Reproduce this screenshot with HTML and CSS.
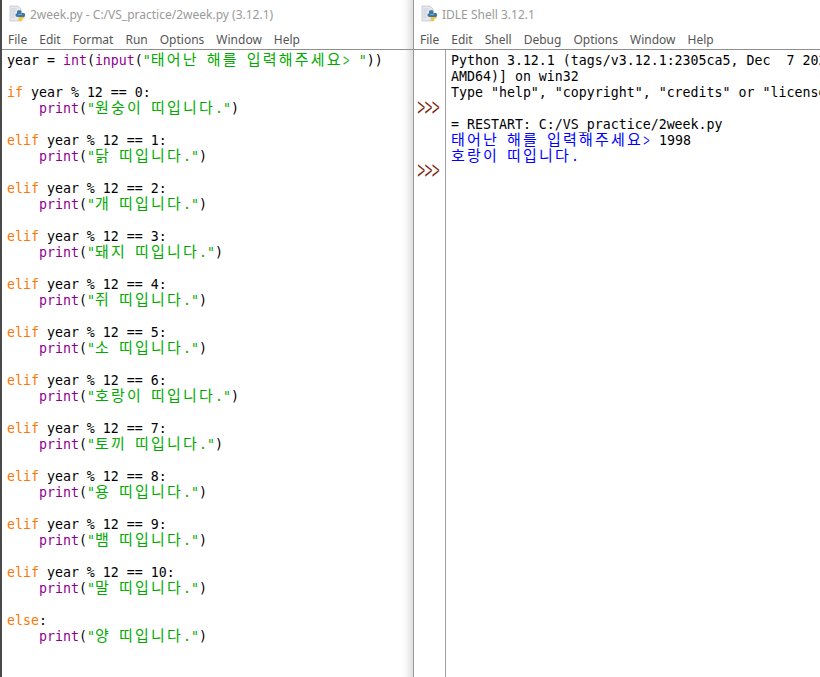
FILE: index.html
```html
<!DOCTYPE html>
<html lang="ko">
<head>
<meta charset="utf-8">
<title>IDLE</title>
<link rel="stylesheet" href="styles.css">
</head>
<body>
<div class="desktop">
  <section class="window editor-window">
    <header class="titlebar">
      <svg class="app-icon" viewBox="0 0 18 18"><path d="M1 1h8l3 3v12H1z" fill="#e6e8ec" stroke="#bcc0c8" stroke-width=".7"/><path d="M2.500 4h5M2.500 6h4M2.500 8h3M2.500 10h3M2.500 12h3" stroke="#c4c8d0" stroke-width=".8"/><path d="M8 6.500c0-1.800 4.500-1.800 4.500 0v2.500h-3v.5h3.200V8H15c1.500 0 1.500 4 0 4h-5.500C7.500 12 6.500 11.500 6.500 10S7 8.500 8 8.500z" fill="#3d78ab"/><path d="M10 12h5.500v1.500h-2v1.500c0 1.600-4 1.600-4 0v-2z" fill="#f2c53d"/></svg>
      <span class="title">2week.py - C:/VS_practice/2week.py (3.12.1)</span>
    </header>
    <nav class="menubar"><span>File</span><span>Edit</span><span>Format</span><span>Run</span><span>Options</span><span>Window</span><span>Help</span></nav>
    <pre class="code">year = <i class="b">int</i>(<i class="b">input</i>(<i class="s">"<b>태어난</b> <b>해를</b> <b>입력해주세요</b><u>&gt;</u> "</i>))

<i class="k">if</i> year % 12 == 0:
    <i class="b">print</i>(<i class="s">"<b>원숭이</b> <b>띠입니다</b>."</i>)

<i class="k">elif</i> year % 12 == 1:
    <i class="b">print</i>(<i class="s">"<b>닭</b> <b>띠입니다</b>."</i>)

<i class="k">elif</i> year % 12 == 2:
    <i class="b">print</i>(<i class="s">"<b>개</b> <b>띠입니다</b>."</i>)

<i class="k">elif</i> year % 12 == 3:
    <i class="b">print</i>(<i class="s">"<b>돼지</b> <b>띠입니다</b>."</i>)

<i class="k">elif</i> year % 12 == 4:
    <i class="b">print</i>(<i class="s">"<b>쥐</b> <b>띠입니다</b>."</i>)

<i class="k">elif</i> year % 12 == 5:
    <i class="b">print</i>(<i class="s">"<b>소</b> <b>띠입니다</b>."</i>)

<i class="k">elif</i> year % 12 == 6:
    <i class="b">print</i>(<i class="s">"<b>호랑이</b> <b>띠입니다</b>."</i>)

<i class="k">elif</i> year % 12 == 7:
    <i class="b">print</i>(<i class="s">"<b>토끼</b> <b>띠입니다</b>."</i>)

<i class="k">elif</i> year % 12 == 8:
    <i class="b">print</i>(<i class="s">"<b>용</b> <b>띠입니다</b>."</i>)

<i class="k">elif</i> year % 12 == 9:
    <i class="b">print</i>(<i class="s">"<b>뱀</b> <b>띠입니다</b>."</i>)

<i class="k">elif</i> year % 12 == 10:
    <i class="b">print</i>(<i class="s">"<b>말</b> <b>띠입니다</b>."</i>)

<i class="k">else</i>:
    <i class="b">print</i>(<i class="s">"<b>양</b> <b>띠입니다</b>."</i>)</pre>
  </section>
  <section class="window shell-window">
    <header class="titlebar">
      <svg class="app-icon" viewBox="0 0 18 18"><path d="M1 1h8l3 3v12H1z" fill="#e6e8ec" stroke="#bcc0c8" stroke-width=".7"/><path d="M2.500 4h5M2.500 6h4M2.500 8h3M2.500 10h3M2.500 12h3" stroke="#c4c8d0" stroke-width=".8"/><path d="M8 6.500c0-1.800 4.500-1.800 4.500 0v2.500h-3v.5h3.200V8H15c1.500 0 1.500 4 0 4h-5.500C7.500 12 6.500 11.500 6.500 10S7 8.500 8 8.500z" fill="#3d78ab"/><path d="M10 12h5.500v1.500h-2v1.500c0 1.600-4 1.600-4 0v-2z" fill="#f2c53d"/></svg>
      <span class="title">IDLE Shell 3.12.1</span>
    </header>
    <nav class="menubar"><span>File</span><span>Edit</span><span>Shell</span><span>Debug</span><span>Options</span><span>Window</span><span>Help</span></nav>
    <div class="shell-body">
      <div class="gutter"><i class="prompt prompt-one">&gt;&gt;&gt;</i><i class="prompt prompt-two">&gt;&gt;&gt;</i></div>
      <pre class="code shell-text">Python 3.12.1 (tags/v3.12.1:2305ca5, Dec  7 2023, 22:03:25) [MSC v.1937 64 bit (
AMD64)] on win32
Type "help", "copyright", "credits" or "license()" for more information.

= RESTART: C:/VS_practice/2week.py
<i class="o"><b>태어난</b> <b>해를</b> <b>입력해주세요</b><u>&gt;</u></i> 1998
<i class="o"><b>호랑이</b> <b>띠입니다</b>.</i></pre>
    </div>
  </section>
</div>
</body>
</html>
```
FILE: styles.css
```css
* { box-sizing: border-box; }
html, body { margin: 0; height: 100%; overflow: hidden; background: #fff; }
.desktop { display: flex; width: 820px; height: 677px; overflow: hidden; }
.window { display: flex; flex-direction: column; height: 677px; background: #fff; }
.editor-window { width: 414px; flex: none; border-left: 2px solid #4a4a4a; border-right: 1px solid #9a9a9a; box-shadow: inset -12px 0 9px -9px #d4d4d4; }
.shell-window { flex: 1; min-width: 0; }
.titlebar { flex: none; height: 28px; display: flex; align-items: center; gap: 3px; padding: 0 0 0 7px; }
.app-icon { width: 18px; height: 18px; flex: none; }
.title { font: 12px "Noto Sans", sans-serif; color: #9a9a9a; white-space: nowrap; }
.menubar { flex: none; height: 22px; display: flex; gap: 12px; padding: 3px 0 0 6px; border-bottom: 1px solid #8f8f8f; font: 12px "Noto Sans", sans-serif; color: #555; }
.code { flex: 1; margin: 0; padding: 3px 0 0 5px; font: 13.28px/16px "DejaVu Sans Mono", monospace; color: #000; white-space: pre; overflow: hidden; }
.code i { font-style: normal; }
.code b { font-family: "Noto Sans CJK KR", sans-serif; font-weight: 400; font-size: 15px; letter-spacing: 2.200px; line-height: 0; }
.code u { display: inline-block; width: 8px; font-family: Roboto, sans-serif; font-weight: 300; font-size: 13px; line-height: 0; text-decoration: none; transform: scaleY(1.5); }
.k { color: #ff7700; }
.b { color: #900090; }
.s { color: #00aa00; }
.o { color: #0000ff; }
.shell-body { flex: 1; display: flex; min-height: 0; }
.gutter { position: relative; width: 32px; flex: none; border-right: 1px solid #a0a0a0; }
.prompt { position: absolute; left: 3px; font: 300 16px/16px Roboto, sans-serif; font-style: normal; color: #7a1c0c; letter-spacing: -1px; transform: scaleY(1.8); }
.prompt-one { top: 50px; }
.prompt-two { top: 113px; }
.shell-text { padding-left: 5px; }
```
